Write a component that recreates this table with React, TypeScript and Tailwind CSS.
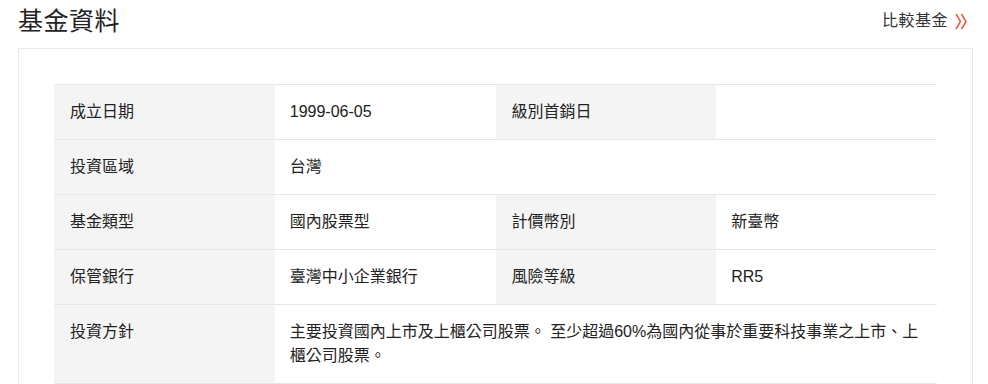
const FONT = "font-['Liberation_Sans','Noto_Sans_CJK_TC',sans-serif]";

type Row = { label: string; value: string; label2?: string; value2?: string };

const ROWS: Row[] = [
  { label: "成立日期", value: "1999-06-05", label2: "級別首銷日", value2: "" },
  { label: "投資區域", value: "台灣" },
  { label: "基金類型", value: "國內股票型", label2: "計價幣別", value2: "新臺幣" },
  { label: "保管銀行", value: "臺灣中小企業銀行", label2: "風險等級", value2: "RR5" },
  {
    label: "投資方針",
    value: "主要投資國內上市及上櫃公司股票。 至少超過60%為國內從事於重要科技事業之上市、上櫃公司股票。",
  },
];

function DoubleChevron() {
  return (
    <svg width="13" height="17" viewBox="0 0 13 17" fill="none" stroke="#ea5a3d" strokeWidth="1.5">
      <path d="M1 1 L5.5 8.5 L1 16" />
      <path d="M6.5 1 L11 8.5 L6.5 16" />
    </svg>
  );
}

export default function App() {
  const labelCls = "w-1/4 bg-[#f4f4f4] px-[16px] py-[15px] align-top";
  const valueCls = "w-1/4 px-[15px] py-[15px] align-top";

  return (
    <div className={`min-h-[384px] bg-white text-[#222] ${FONT}`}>
      <div className="flex h-[42px] items-center justify-between pl-[18px] pr-[20px]">
        <h1 className="text-[25px] leading-none font-normal tracking-[0.5px] text-[#222]">基金資料</h1>
        <a className="flex items-center gap-[7px] text-[16px] text-[#333]">
          <span className="tracking-[0.5px]">比較基金</span>
          <DoubleChevron />
        </a>
      </div>

      <div className="mt-[6px] ml-[18px] w-[955px] border border-[#e9e9e9] px-[35px] pt-[35px] pb-[30px]">
        <table className="w-full table-fixed border-collapse text-[16px] leading-[24px]">
          <tbody>
            {ROWS.map((row) => (
              <tr key={row.label} className="border-t border-b border-[#e6e6e6]">
                <td className={labelCls}>{row.label}</td>
                {row.label2 !== undefined ? (
                  <>
                    <td className={valueCls}>{row.value}</td>
                    <td className={labelCls}>{row.label2}</td>
                    <td className={valueCls}>{row.value2}</td>
                  </>
                ) : (
                  <td colSpan={3} className="px-[15px] pr-[18px] py-[15px] align-top">
                    {row.value}
                  </td>
                )}
              </tr>
            ))}
          </tbody>
        </table>
      </div>
    </div>
  );
}
